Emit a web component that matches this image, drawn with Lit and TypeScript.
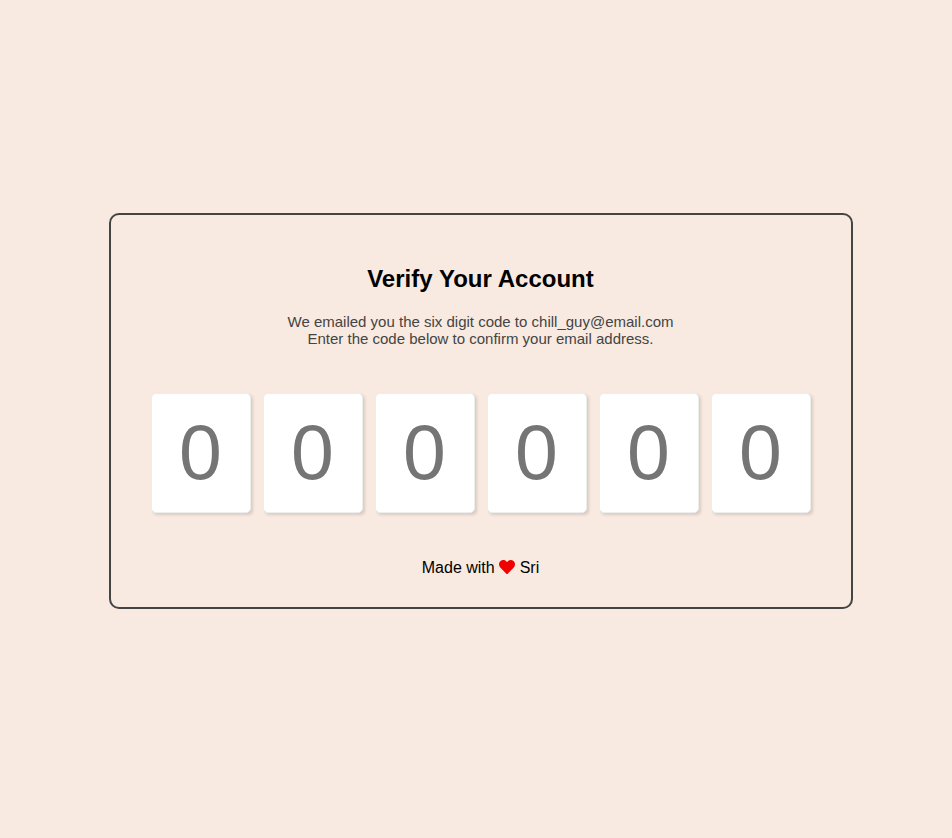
import { LitElement, html, css } from "lit";
import { customElement, state } from "lit/decorators.js";

@customElement("app-root")
class AppRoot extends LitElement {
  static styles = css`
    :host {
      display: block;
      box-sizing: border-box;
      height: 838px;
      padding: 213px 99px 0 109px;
      background: #f8eae0;
      overflow: hidden;
      font-family: "Liberation Sans", Arial, sans-serif;
      color: #000;
    }
    .card {
      box-sizing: border-box;
      height: 396px;
      border: 2px solid #444;
      border-radius: 10px;
      padding-top: 50px;
      display: flex;
      flex-direction: column;
      align-items: center;
      text-align: center;
    }
    h2 {
      margin: 0;
      font-size: 24px;
      line-height: 28px;
      letter-spacing: 0.02px;
      padding-right: 1px;
    }
    .info {
      margin: 20px 0 0;
      padding-right: 1px;
      font-size: 15px;
      line-height: 17px;
      color: #444;
    }
    .codes {
      margin-top: 46px;
      display: flex;
      gap: 12px;
    }
    .code {
      box-sizing: border-box;
      width: 100px;
      height: 120px;
      padding: 0 1px 2px 0;
      border: 1px solid #eee;
      border-radius: 5px;
      outline: none;
      background: #fff;
      box-shadow: 2px 2px 3px -0.5px rgba(0, 0, 0, 0.13);
      font: 77px "Liberation Sans", Arial, sans-serif;
      text-align: center;
    }
    .code::placeholder {
      color: #757575;
      opacity: 1;
    }
    .credit {
      margin-top: 46px;
      height: 18px;
      display: flex;
      gap: 4.5px;
      padding-right: 1px;
      font-size: 16px;
      line-height: 18px;
    }
    .heart {
      width: 16px;
      height: 16px;
      fill: #f00000;
    }
  `;

  @state() private slots = [0, 1, 2, 3, 4, 5];

  render() {
    return html`
      <div class="card">
        <h2>Verify Your Account</h2>
        <p class="info">
          We emailed you the six digit code to chill_guy@email.com<br />
          Enter the code below to confirm your email address.
        </p>
        <div class="codes">
          ${this.slots.map(
            (i) => html`<input class="code" type="text" inputmode="numeric" maxlength="1" placeholder="0" aria-label="Digit ${i + 1}" />`
          )}
        </div>
        <div class="credit">
          <span>Made with</span>
          <svg class="heart" viewBox="0 0 512 512" aria-hidden="true">
            <path d="M462.300 62.600C407.500 15.900 326 24.300 275.700 76.200L256 96.500l-19.700-20.300C186.100 24.300 104.500 15.900 49.700 62.600c-62.800 53.600-66.100 149.800-9.900 207.900l193.500 199.800c12.500 12.900 32.800 12.900 45.300 0l193.500-199.800c56.300-58.100 53-154.300-9.800-207.900z" />
          </svg>
          <span>Sri</span>
        </div>
      </div>
    `;
  }
}
